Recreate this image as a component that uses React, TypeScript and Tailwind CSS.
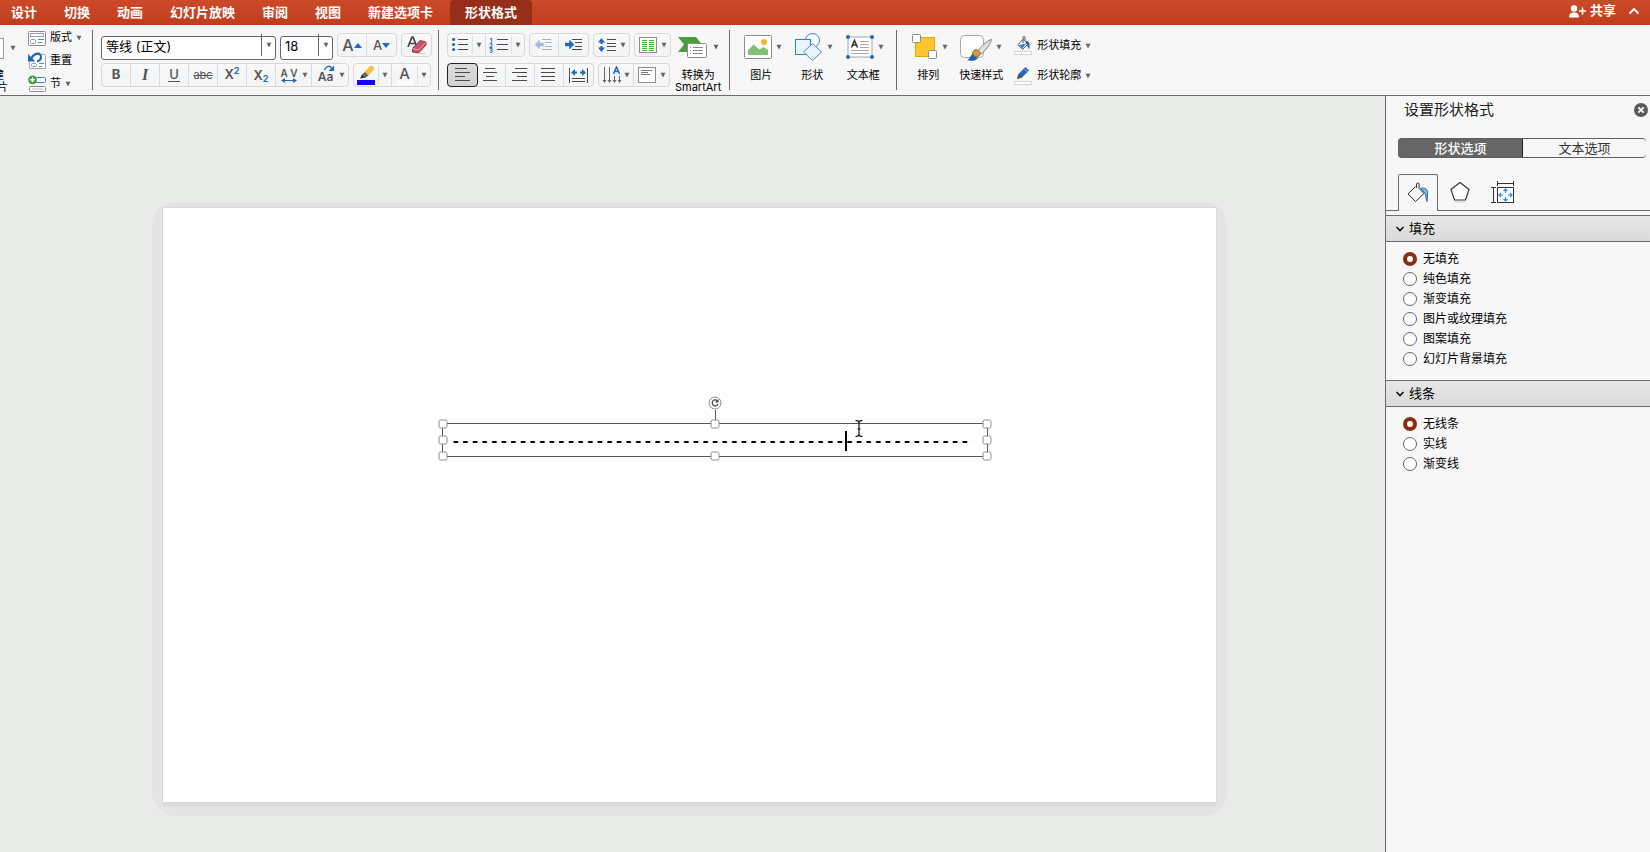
import { useState } from 'react';
import type { ReactNode } from 'react';
import clsx from 'clsx';

const tabs = ['设计', '切换', '动画', '幻灯片放映', '审阅', '视图', '新建选项卡'];

const fillOptions = ['无填充', '纯色填充', '渐变填充', '图片或纹理填充', '图案填充', '幻灯片背景填充'];
const lineOptions = ['无线条', '实线', '渐变线'];

const handles = [
  'left-0 top-0', 'left-1/2 top-0', 'left-full top-0',
  'left-0 top-1/2', 'left-full top-1/2',
  'left-0 top-full', 'left-1/2 top-full', 'left-full top-full',
];

function Caret() {
  return (
    <svg width="6" height="6" viewBox="0 0 6 6" className="shrink-0">
      <path d="M0.5 0.8h5L3 5.6z" fill="#666" />
    </svg>
  );
}

function Divider() {
  return <div className="my-[5px] w-px shrink-0 bg-[#6b6b6b]" />;
}

function ButtonGroup({ children }: { children: ReactNode }) {
  return (
    <div className="flex h-6 divide-x divide-[#d9dcdf] rounded border border-[#d6d8da] bg-linear-to-b from-[#fbfbfb] via-[#f3f5f7] to-[#f5f5f5]">
      {children}
    </div>
  );
}

interface ToolProps {
  label: string;
  width?: string;
  menu?: boolean;
  split?: boolean;
  active?: boolean;
  children: ReactNode;
}

function Tool({ label, width = 'w-[29px]', menu, split, active, children }: ToolProps) {
  return (
    <button
      aria-label={label}
      title={label}
      className={clsx(
        'flex items-center justify-center text-[#555]',
        width,
        active && '-m-px rounded border border-[#222] bg-linear-to-b from-[#dcdcdc] to-[#d2d2d2]',
      )}
    >
      <span className="flex flex-1 items-center justify-center">{children}</span>
      {menu && (
        <span className={clsx('flex h-[18px] items-center', split ? 'border-l border-[#dcdfe2] px-[3px]' : 'pr-[3px]')}>
          <Caret />
        </span>
      )}
    </button>
  );
}

function Lines({ rows, width = 16, height = 14 }: { rows: [number, number, number][]; width?: number; height?: number }) {
  return (
    <svg width={width} height={height} viewBox={`0 0 ${width} ${height}`} stroke="#4a4a4a">
      {rows.map(([y, x1, x2]) => <path key={y} d={`M${x1} ${y}H${x2}`} />)}
    </svg>
  );
}

function SmallButton({ label, icon, menu }: { label: string; icon: ReactNode; menu?: boolean }) {
  return (
    <button className="flex h-[23px] items-center gap-1 text-[11px] whitespace-nowrap">
      {icon}
      <span>{label}</span>
      {menu && <Caret />}
    </button>
  );
}

function BigButton({ lines, icon, wide }: { lines: string[]; icon: ReactNode; wide?: boolean }) {
  return (
    <button className="flex shrink-0 flex-col items-center pt-2 text-[11px] leading-3 whitespace-nowrap">
      <span className="mb-2 flex h-7 items-center gap-1">
        {icon}
        <Caret />
      </span>
      {lines.map((line) => <span key={line} className={wide ? '' : 'pr-1'}>{line}</span>)}
    </button>
  );
}

function Combo({ label, value, width }: { label: string; value: string; width: string }) {
  return (
    <div className={clsx('relative h-6', width)}>
      <select
        aria-label={label}
        defaultValue={value}
        className="h-full w-full appearance-none rounded-[3px] border border-[#666] bg-white pb-1 pl-1 text-[13px] leading-4 text-black"
      >
        <option>{value}</option>
      </select>
      <span className="pointer-events-none absolute inset-y-px right-px flex w-[14px] items-center justify-center border-l border-[#666]">
        <Caret />
      </span>
    </div>
  );
}

const lineRows = {
  left: [[0.5, 0, 12], [4.5, 0, 15], [8.5, 0, 10], [12.5, 0, 15]],
  center: [[0.5, 2, 12], [4.5, 0, 14], [8.5, 3, 11], [12.5, 0, 14]],
  right: [[0.5, 3, 15], [4.5, 0, 15], [8.5, 5, 15], [12.5, 0, 15]],
  full: [[0.5, 0, 14], [4.5, 0, 14], [8.5, 0, 14], [12.5, 0, 14]],
  numbered: [[1.5, 0, 11], [6.5, 0, 11], [11.5, 0, 11]],
} as Record<string, [number, number, number][]>;

function LayoutIcon() {
  return (
    <svg width="18" height="16" viewBox="0 0 18 16" fill="none" stroke="#8c8c8c">
      <rect x="0.5" y="1.5" width="17" height="14" rx="1" fill="#fff" />
      <rect x="2.5" y="3.5" width="13" height="3" stroke="#8fa3b8" />
      <rect x="2.5" y="9.5" width="5" height="4" rx="1" stroke="#7f9bc0" />
      <path d="M10 9.5h6M10 12.5h4" stroke="#5b87bf" />
    </svg>
  );
}

function ResetIcon() {
  return (
    <svg width="18" height="18" viewBox="0 0 18 18" fill="none">
      <path d="M13 2.5h3.5a1 1 0 0 1 1 1v13h-16v-7" stroke="#a5a5a5" fill="#fff" />
      <rect x="3.5" y="11.5" width="5" height="3" rx="1" stroke="#7f9bc0" />
      <path d="M11 11.5h5M11 14.5h3" stroke="#5b87bf" />
      <path d="M3.5 6C7 0 13.5 0.5 13 5.5c-0.2 2-1.5 3.5-4 4" stroke="#1f68b8" strokeWidth="2.2" />
      <path d="M0 2v7.5h7.5z" fill="#1f68b8" />
    </svg>
  );
}

function SectionIcon() {
  return (
    <svg width="18" height="18" viewBox="0 0 18 18" fill="none">
      <rect x="5.5" y="2.5" width="12" height="5" rx="1" fill="#fff" stroke="#2f86e0" />
      <rect x="1.5" y="11.5" width="16" height="5" rx="1" fill="#fff" stroke="#8c8c8c" />
      <path d="M4 14h11" stroke="#aebfd2" />
      <circle cx="4.5" cy="4.8" r="4.4" fill="#459c3c" />
      <path d="M4.5 2.3v5M2 4.8h5" stroke="#fff" strokeWidth="1.4" />
    </svg>
  );
}

function EraserIcon() {
  return (
    <svg width="20" height="18" viewBox="0 0 20 18">
      <path d="M1 11L5 1h1l4 10M2.5 7.5h6" fill="none" stroke="#444" strokeWidth="1.7" />
      <path d="M12 17.5h7" stroke="#d8d8d8" />
      <path d="M5.5 12.5L13 4.5 19 6v3l-7.5 8-6-1z" fill="#c95368" stroke="#8e3344" />
      <path d="M5.5 12.5l6 1.5 7.5-8" fill="none" stroke="#eda2ae" />
    </svg>
  );
}

function BulletIcon() {
  return (
    <svg width="17" height="14" viewBox="0 0 17 14">
      {[1.5, 6.5, 11.5].map((y) => (
        <g key={y}>
          <circle cx="1.6" cy={y} r="1.6" fill="#2469b8" />
          <path d={`M6 ${y}h10`} stroke="#4a4a4a" />
        </g>
      ))}
    </svg>
  );
}

function NumberIcon() {
  return (
    <span className="flex items-center gap-1">
      <span className="flex flex-col text-[6px] leading-[5px] font-bold text-[#2469b8]">
        <span>1</span><span>2</span><span>3</span>
      </span>
      <Lines width={11} rows={lineRows.numbered} />
    </span>
  );
}

function IndentIcon({ outdent }: { outdent?: boolean }) {
  return (
    <svg width="18" height="12" viewBox="0 0 18 12" opacity={outdent ? 0.4 : 1}>
      <path d={outdent ? 'M7 0.5h9M10 3.5h7M10 7.5h7M7 10.5h10' : 'M7 0.5h10M10 3.5h7M10 7.5h7M7 10.5h10'} stroke="#4a4a4a" />
      <path
        d={outdent ? 'M0 5.5l4.5-4.500v3h4v3h-4v3z' : 'M9 5.5l-4.5-4.500v3h-4.500v3h4.500v3z'}
        fill="#2469b8"
        stroke="#2469b8"
        strokeWidth="0.5"
      />
    </svg>
  );
}

function PictureIcon() {
  return (
    <svg width="28" height="26" viewBox="0 0 28 26">
      <rect x="0.5" y="1.5" width="27" height="23" rx="1" fill="#fff" stroke="#8c8c8c" />
      <path d="M4 21v-5l5.5-5.5 6 5 4-2.5 4.5 3v5z" fill="#81c175" />
      <circle cx="20" cy="8" r="3" fill="#f5b52a" />
    </svg>
  );
}

function ShapesIcon() {
  return (
    <svg width="28" height="28" viewBox="0 0 28 28" fill="#eaf4fd" stroke="#2d7fd3">
      <circle cx="17.5" cy="7.5" r="7" fill="#fff" />
      <rect x="0.5" y="6.5" width="15" height="15" />
      <path d="M17.5 10.5l9 8.5-9 8.5-9-8.5z" stroke="#4f89c4" />
    </svg>
  );
}

function TextBoxIcon() {
  return (
    <svg width="28" height="26" viewBox="0 0 28 26">
      <rect x="2" y="3" width="24" height="20" fill="#fff" stroke="#a4a4a4" />
      <path d="M14 7.5h9M14 10.5h9M14 13.5h9M5 16.5h18M5 19.5h18" stroke="#a9a9a9" />
      <path d="M5.5 13.5L8.5 6.5l3 7M6.5 11h4" fill="none" stroke="#333" strokeWidth="1.5" />
      {[[2, 3], [26, 3], [2, 23], [26, 23]].map(([x, y]) => (
        <circle key={`${x}-${y}`} cx={x} cy={y} r="2" fill="#2469b8" />
      ))}
    </svg>
  );
}

function SmartArtIcon() {
  return (
    <svg width="32" height="24" viewBox="0 0 32 24">
      <path d="M1 2h18l6 7.5-6 7.5H1l6-7.5z" fill="#4a9e3f" />
      <rect x="10.5" y="8.5" width="19" height="14" rx="1" fill="#fff" stroke="#8c8c8c" />
      <path d="M16 12.5h10M16 15.5h10M16 18.5h10M13 12.5h1M13 15.5h1M13 18.5h1" stroke="#8a8a8a" />
    </svg>
  );
}

function ArrangeIcon() {
  return (
    <svg width="26" height="28" viewBox="0 0 26 28">
      <rect x="3.5" y="4.5" width="19" height="19" fill="#fdc62f" stroke="#e2a51b" />
      <rect x="0.5" y="1.5" width="8" height="8" rx="1" fill="#fff" stroke="#8c8c8c" />
      <rect x="16.5" y="17.5" width="8" height="8" rx="1" fill="#fff" stroke="#8c8c8c" />
    </svg>
  );
}

function QuickStyleIcon() {
  return (
    <svg width="32" height="28" viewBox="0 0 32 28">
      <rect x="0.5" y="2.5" width="23" height="22" rx="4" fill="#fff" stroke="#a9a9a9" />
      <path d="M31.5 6.5c-5 1-11 8-13.5 11.5l3.5 3C25 17.5 30.5 11 31.5 6.5z" fill="#e4e4e4" stroke="#808080" />
      <path d="M12.5 21c0-4 4-6 7-2.5 2 3-0.5 6-4.5 5.5z" fill="#d3983e" stroke="#94661e" />
      <path d="M7 27c3-0.5 3-5 6-6 1 3 3 3.500 5 4-2 3-8 3.500-11 2z" fill="#1d64b4" />
    </svg>
  );
}

function ShapeFillIcon() {
  return (
    <svg width="19" height="20" viewBox="0 0 19 20">
      <path d="M4 8.5l5-5 5 4.5-5.5 5.5z" fill="#fff" stroke="#555" />
      <path d="M5 9l7-1.5-3.5 5z" fill="#2d7fd3" />
      <path d="M9 7V1.5c0-1.5 2-1.5 2 0v3" fill="none" stroke="#555" />
      <path d="M12 5c3 0 4 2 3.5 8-2-1-2-5-3.5-5z" fill="#1d64b4" />
      <rect x="0.5" y="15.5" width="17" height="3" fill="#fff" stroke="#d5d5d5" />
    </svg>
  );
}

function ShapeOutlineIcon() {
  return (
    <svg width="19" height="20" viewBox="0 0 19 20">
      <path d="M3 13l1.5-5 7-7 3.5 3.5-7 7z" fill="#2469b8" />
      <path d="M3 13l1.5-5 3.5 3.5z" fill="#555" />
      <path d="M10 2.5l3.5 3.5" stroke="#8fb9e6" />
      <rect x="0.5" y="15.5" width="17" height="3" fill="#fff" stroke="#d5d5d5" />
    </svg>
  );
}

function TitleBar() {
  return (
    <header className="flex h-[25px] shrink-0 items-stretch bg-linear-to-b from-[#cb4a2a] to-[#c13d1c] text-[13px] font-bold text-white">
      <nav className="flex gap-[27px] pl-[11px]">
        {tabs.map((tab) => <button key={tab} className="whitespace-nowrap">{tab}</button>)}
      </nav>
      <button className="ml-[17px] rounded-t bg-[#962f17] px-[15px] whitespace-nowrap">形状格式</button>
      <div className="ml-auto flex items-center gap-3 pr-[10px] pb-[3px]">
        <button className="flex items-center gap-1">
          <svg width="17" height="13" viewBox="0 0 17 13" fill="#fff">
            <circle cx="5" cy="3.5" r="3.2" />
            <path d="M0 12.5c0-4 2-5 5-5s5 1 5 5z" />
            <path d="M13.5 2.5v7M10 6h7" stroke="#fff" strokeWidth="1.6" />
          </svg>
          共享
        </button>
        <button aria-label="折叠功能区">
          <svg width="12" height="8" viewBox="0 0 12 8" fill="none" stroke="#fff" strokeWidth="1.8">
            <path d="M1.5 6.5L6 2l4.5 4.5" />
          </svg>
        </button>
      </div>
    </header>
  );
}

function SlideGroup() {
  return (
    <div className="flex w-[92px] shrink-0 overflow-hidden">
      <button className="-ml-7 flex w-9 shrink-0 flex-col items-end pt-[13px] text-[11px] leading-3">
        <span className="mr-1 mb-[10px] h-[21px] w-7 shrink-0 border border-[#999] bg-white" />
        <span className="pr-1">新建</span>
        <span>幻灯片</span>
      </button>
      <span className="mt-5 ml-[2px]"><Caret /></span>
      <div className="ml-3 flex flex-col pt-px">
        <SmallButton label="版式" icon={<LayoutIcon />} menu />
        <SmallButton label="重置" icon={<ResetIcon />} />
        <SmallButton label="节" icon={<SectionIcon />} menu />
      </div>
    </div>
  );
}

function FontGroup() {
  return (
    <div className="flex shrink-0 flex-col gap-[6px] pt-2 pr-[6px] pl-2">
      <div className="flex gap-1">
        <Combo label="字体" value="等线 (正文)" width="w-[175px]" />
        <Combo label="字号" value="18" width="w-[53px]" />
        <ButtonGroup>
          <Tool label="增大字号">
            <span className="text-base leading-4 font-medium">A</span>
            <svg width="8" height="5" viewBox="0 0 8 5"><path d="M0 5l4-5 4 5z" fill="#2469b8" /></svg>
          </Tool>
          <Tool label="减小字号">
            <span className="text-[13px] leading-4 font-medium">A</span>
            <svg width="8" height="5" viewBox="0 0 8 5"><path d="M0 0l4 5 4-5z" fill="#2469b8" /></svg>
          </Tool>
        </ButtonGroup>
        <ButtonGroup>
          <Tool label="清除格式"><EraserIcon /></Tool>
        </ButtonGroup>
      </div>
      <div className="flex gap-1">
        <ButtonGroup>
          <Tool label="加粗"><span className="text-[13px] font-bold">B</span></Tool>
          <Tool label="倾斜"><span className="font-['Liberation_Serif',serif] text-base leading-4 font-bold italic">I</span></Tool>
          <Tool label="下划线"><span className="border-b border-[#555] px-px text-[13px] leading-[13px] font-medium">U</span></Tool>
          <Tool label="删除线"><span className="text-[11px] line-through">abc</span></Tool>
          <Tool label="上标">
            <span className="text-[13px] font-semibold">X</span>
            <span className="mb-2 text-[9px] leading-3 font-bold text-[#2469b8]">2</span>
          </Tool>
          <Tool label="下标">
            <span className="text-[13px] leading-4 font-semibold">X</span>
            <span className="mt-2 text-[9px] leading-3 font-bold text-[#2469b8]">2</span>
          </Tool>
          <Tool label="字符间距" width="w-9" menu>
            <span className="flex flex-col items-center text-[10px] leading-[10px] font-semibold">
              <span>A V</span>
              <svg width="16" height="5" viewBox="0 0 16 5">
                <path d="M2 2.5h12" stroke="#2469b8" />
                <path d="M0 2.5L4 0v5zM16 2.5L12 0v5z" fill="#2469b8" />
              </svg>
            </span>
          </Tool>
          <Tool label="更改大小写" width="w-9" menu>
            <span className="relative pt-1 text-[12px] leading-4 font-semibold">
              Aa
              <svg width="10" height="6" viewBox="0 0 10 6" className="absolute top-0 left-[6px]">
                <path d="M0.5 5C2 0.5 6 0.5 7.5 3" fill="none" stroke="#2469b8" strokeWidth="1.5" />
                <path d="M10 0.5V6H4.5z" fill="#2469b8" />
              </svg>
            </span>
          </Tool>
        </ButtonGroup>
        <ButtonGroup>
          <Tool label="突出显示颜色" width="w-[38px]" menu split>
            <svg width="18" height="20" viewBox="0 0 18 20">
              <path d="M8 7l5-5.5c2-1 4.5 1 3.5 3L11 10z" fill="#fcc134" stroke="#d79a1d" strokeWidth="0.5" />
              <path d="M5 9.5L8 7l3.5 3.5L9 12.5z" fill="#666" />
              <path d="M3 13.5l2-4 4 3z" fill="#333" />
              <rect y="15" width="18" height="5" fill="#1500f5" />
            </svg>
          </Tool>
          <Tool label="字体颜色" width="w-[38px]" menu split>
            <span className="flex flex-col items-center">
              <span className="text-[15px] leading-[15px] font-medium">A</span>
              <span className="h-1 w-4 bg-white" />
            </span>
          </Tool>
        </ButtonGroup>
      </div>
    </div>
  );
}

function ParagraphGroup() {
  return (
    <div className="flex shrink-0 flex-col gap-[6px] pt-2 pl-2">
      <div className="flex gap-1">
        <ButtonGroup>
          <Tool label="项目符号" width="w-[38px]" menu split><BulletIcon /></Tool>
          <Tool label="编号" width="w-[38px]" menu split><NumberIcon /></Tool>
        </ButtonGroup>
        <ButtonGroup>
          <Tool label="减少缩进量"><IndentIcon outdent /></Tool>
          <Tool label="增加缩进量"><IndentIcon /></Tool>
        </ButtonGroup>
        <ButtonGroup>
          <Tool label="行距" width="w-[35px]" menu>
            <svg width="18" height="14" viewBox="0 0 18 14">
              <path d="M3.5 0L7 4.5H4.5v5H7L3.5 14 0 9.5h2.5v-5H0z" fill="#2469b8" />
              <path d="M2 7h3" stroke="#f5f6f8" strokeWidth="2" />
              <path d="M9 1.5h9M9 5.5h9M9 8.5h9M9 12.5h9" stroke="#4a4a4a" />
            </svg>
          </Tool>
        </ButtonGroup>
        <ButtonGroup>
          <Tool label="分栏" width="w-[35px]" menu>
            <svg width="18" height="16" viewBox="0 0 18 16">
              <rect x="0.5" y="0.5" width="17" height="15" fill="#fff" stroke="#8c8c8c" />
              <path d="M3 3.5h5M3 5.5h5M3 7.5h5M3 9.5h5M3 11.5h5M3 13.5h5M10 3.5h5M10 5.5h5M10 7.5h5M10 9.5h5M10 11.5h5M10 13.5h5" stroke="#3fb52f" strokeWidth="1.2" />
            </svg>
          </Tool>
        </ButtonGroup>
      </div>
      <div className="flex gap-1">
        <ButtonGroup>
          <Tool label="左对齐" width="w-[31px]" active><Lines rows={lineRows.left} /></Tool>
          <Tool label="居中"><Lines rows={lineRows.center} /></Tool>
          <Tool label="右对齐"><Lines rows={lineRows.right} /></Tool>
          <Tool label="两端对齐"><Lines rows={lineRows.full} /></Tool>
          <Tool label="分散对齐">
            <svg width="19" height="15" viewBox="0 0 19 15">
              <path d="M0.5 0v15M18.5 0v15M3 10.5h13M3 13.5h13" stroke="#4a4a4a" />
              <path d="M2 4.5L6 1v2.5h2v2H6V8zM17 4.5L13 1v2.5h-2v2h2V8z" fill="#2469b8" />
            </svg>
          </Tool>
        </ButtonGroup>
        <ButtonGroup>
          <Tool label="文字方向" width="w-[35px]" menu>
            <svg width="20" height="18" viewBox="0 0 20 18" fill="none">
              <path d="M2.5 1v14M7.5 1v14M12.5 10v5M17.5 10v5" stroke="#666" />
              <path d="M0.5 14h4l-2 3zM5.5 14h4l-2 3zM10.5 14h4l-2 3zM15.5 14h4l-2 3z" fill="#666" />
              <path d="M11.5 8L14.5 1l3 7M12.5 5.5h4" stroke="#2469b8" strokeWidth="1.5" />
            </svg>
          </Tool>
          <Tool label="对齐文本" width="w-[35px]" menu>
            <svg width="18" height="16" viewBox="0 0 18 16">
              <rect x="0.5" y="0.5" width="17" height="15" fill="#fff" stroke="#8c8c8c" />
              <path d="M3 3.5h11M3 5.5h7M3 7.5h9" stroke="#777" />
            </svg>
          </Tool>
        </ButtonGroup>
      </div>
    </div>
  );
}

function Ribbon() {
  return (
    <div className="flex h-[71px] shrink-0 border-b border-[#6b6b6b] bg-[#f7f7f7] text-black">
      <SlideGroup />
      <Divider />
      <FontGroup />
      <Divider />
      <ParagraphGroup />
      <div className="flex pr-2 pl-1">
        <BigButton lines={['转换为', 'SmartArt']} icon={<SmartArtIcon />} wide />
      </div>
      <Divider />
      <div className="flex gap-[13px] pr-3 pl-[14px]">
        <BigButton lines={['图片']} icon={<PictureIcon />} />
        <BigButton lines={['形状']} icon={<ShapesIcon />} />
        <BigButton lines={['文本框']} icon={<TextBoxIcon />} />
      </div>
      <Divider />
      <div className="flex gap-[11px] pl-[15px]">
        <BigButton lines={['排列']} icon={<ArrangeIcon />} />
        <BigButton lines={['快速样式']} icon={<QuickStyleIcon />} wide />
        <div className="flex flex-col gap-[7px] pt-[9px]">
          <SmallButton label="形状填充" icon={<ShapeFillIcon />} menu />
          <SmallButton label="形状轮廓" icon={<ShapeOutlineIcon />} menu />
        </div>
      </div>
    </div>
  );
}

function Slide() {
  return (
    <main className="min-w-0 flex-1 bg-[#e9ebe8] pt-[106px] pr-[158px] pl-[152px]">
      <div className="rounded-[24px] bg-[#e4e4e4] px-[11px] pt-[6px] pb-[14px]">
        <div className="relative aspect-[1053/594] bg-white shadow-[0_0_0_1px_#d9d9d9,0_5px_0_0_#dcdcdc]">
          {/* selected text box */}
          <div className="absolute top-[215px] left-[279px] h-[34px] w-[546px] border border-[#555]">
            <p className="pt-[5px] pl-2 font-['Liberation_Mono',monospace] text-base leading-[26px] font-bold whitespace-nowrap text-black">
              {'-'.repeat(54)}
            </p>
            <span className="absolute top-[7px] left-[402px] h-5 w-[2px] bg-black" />
            <span className="absolute -top-[14px] left-1/2 h-3 w-px bg-[#555]" />
            <svg width="14" height="14" viewBox="0 0 14 14" fill="none" className="absolute -top-7 left-1/2 -translate-x-1/2">
              <circle cx="7" cy="7" r="6" fill="#fff" stroke="#888" />
              <path d="M9.5 5A3 3 0 1 0 10 8" stroke="#444" strokeWidth="1.2" />
              <path d="M10.5 3v3.5H7z" fill="#444" />
            </svg>
            {handles.map((pos) => (
              <span
                key={pos}
                className={clsx('absolute size-[9px] -translate-x-1/2 -translate-y-1/2 rounded-[2px] border border-[#8c8c8c] bg-white', pos)}
              />
            ))}
            <svg width="8" height="17" viewBox="0 0 8 17" fill="none" stroke="#111" className="absolute -top-1 left-[412px]">
              <path d="M0.5 0.5C3 0.5 4 1.5 4 3v11c0 1.5-1 2.5-3.5 2.5M7.5 0.5C5 0.5 4 1.5 4 3M7.5 16.5C5 16.5 4 15.5 4 14M2.5 9h3" strokeWidth="1.2" />
            </svg>
          </div>
        </div>
      </div>
    </main>
  );
}

function RadioSection({ title, name, options }: { title: string; name: string; options: string[] }) {
  const [value, setValue] = useState(options[0]);
  return (
    <section>
      <h3 className="flex h-[27px] items-center gap-1 border-y border-[#6b6b6b] bg-linear-to-b from-[#e7e7e7] to-[#dadada] pl-[9px] text-[13px]">
        <svg width="10" height="8" viewBox="0 0 10 8" fill="none" stroke="#111" strokeWidth="1.6">
          <path d="M1.5 2L5 5.5 8.5 2" />
        </svg>
        {title}
      </h3>
      <div className="flex flex-col pt-[7px] pb-[11px] pl-[17px]">
        {options.map((option) => (
          <label key={option} className="flex h-5 items-center gap-[6px] text-[12px]">
            <input
              type="radio"
              name={name}
              checked={value === option}
              onChange={() => setValue(option)}
              className="size-[14px] appearance-none rounded-full border border-[#666] bg-white checked:border-4 checked:border-[#8a2d12]"
            />
            <span className="pb-px">{option}</span>
          </label>
        ))}
      </div>
    </section>
  );
}

function FormatPanel() {
  return (
    <aside className="w-[265px] shrink-0 border-l border-[#6b6b6b] bg-[#f7f7f7] text-black">
      <div className="flex h-[42px] items-start justify-between pt-[3px] pr-[2px] pl-[18px]">
        <h2 className="text-[15px] leading-[22px] text-[#222]">设置形状格式</h2>
        <button aria-label="关闭" className="mt-1">
          <svg width="14" height="14" viewBox="0 0 14 14" stroke="#fff" strokeWidth="1.8">
            <circle cx="7" cy="7" r="7" fill="#5a5a5a" stroke="none" />
            <path d="M4.3 4.3l5.4 5.4M9.7 4.3l-5.4 5.4" />
          </svg>
        </button>
      </div>
      <div className="mr-1 ml-3 flex h-5 text-[13px] leading-[17px]">
        <button className="flex-1 rounded-l-[4px] border border-[#5f5f5f] border-r-[#222] bg-[#666] font-medium text-white">形状选项</button>
        <button className="flex-1 rounded-r-[4px] border-y border-[#5f5f5f] text-[#333]">文本选项</button>
      </div>
      <div className="mt-4 mb-1 flex h-[37px]">
        <span className="w-3 border-b border-[#6b6b6b]" />
        <button aria-label="填充与线条" className="flex w-10 items-center justify-center rounded-t-[2px] border border-b-0 border-[#6b6b6b]">
          <svg width="22" height="22" viewBox="0 0 22 22" fill="none" stroke="#333">
            <path d="M8.5 4.5L1 12l7.5 7.5L17 11.5l-5-5V2c0-1.5-2-1.5-2.5 0v4" />
            <path d="M13.5 6.5c4-1.5 7 0.5 7 4 0 3 0 6-0.5 9-1.5-3-0.5-8-3-9.5z" fill="#7fb4e8" stroke="#2469b8" />
          </svg>
        </button>
        <div className="flex flex-1 items-center gap-[20px] border-b border-[#6b6b6b] pl-3">
          <button aria-label="效果">
            <svg width="20" height="22" viewBox="0 0 20 22" fill="none" stroke="#333">
              <path d="M10 1.5l9 7-3.5 10.5h-11L1 8.5z" fill="#fff" strokeWidth="1.2" />
              <path d="M5 21h10" stroke="#ccc" />
            </svg>
          </button>
          <button aria-label="大小与属性">
            <svg width="24" height="24" viewBox="0 0 24 24" fill="none" stroke="#333">
              <rect x="7.5" y="7.5" width="16" height="15" fill="#fff" />
              <path d="M7 3.5h17M7.5 1v5M23.5 1v5M3.5 7v16M1 7.5h5M1 22.5h5" />
              <path d="M15.5 9v4M15.5 17v4M9 15h4M18 15h4M13.5 11l2-2 2 2M13.5 19l2 2 2-2M11 13l-2 2 2 2M20 13l2 2-2 2" stroke="#2d8be8" strokeWidth="1.2" />
            </svg>
          </button>
        </div>
      </div>
      <RadioSection title="填充" name="fill" options={fillOptions} />
      <RadioSection title="线条" name="line" options={lineOptions} />
    </aside>
  );
}

export default function App() {
  return (
    <div className="flex min-h-screen flex-col overflow-hidden font-['Inter','Noto_Sans_CJK_SC',sans-serif]">
      <TitleBar />
      <Ribbon />
      <div className="flex flex-1">
        <Slide />
        <FormatPanel />
      </div>
    </div>
  );
}
